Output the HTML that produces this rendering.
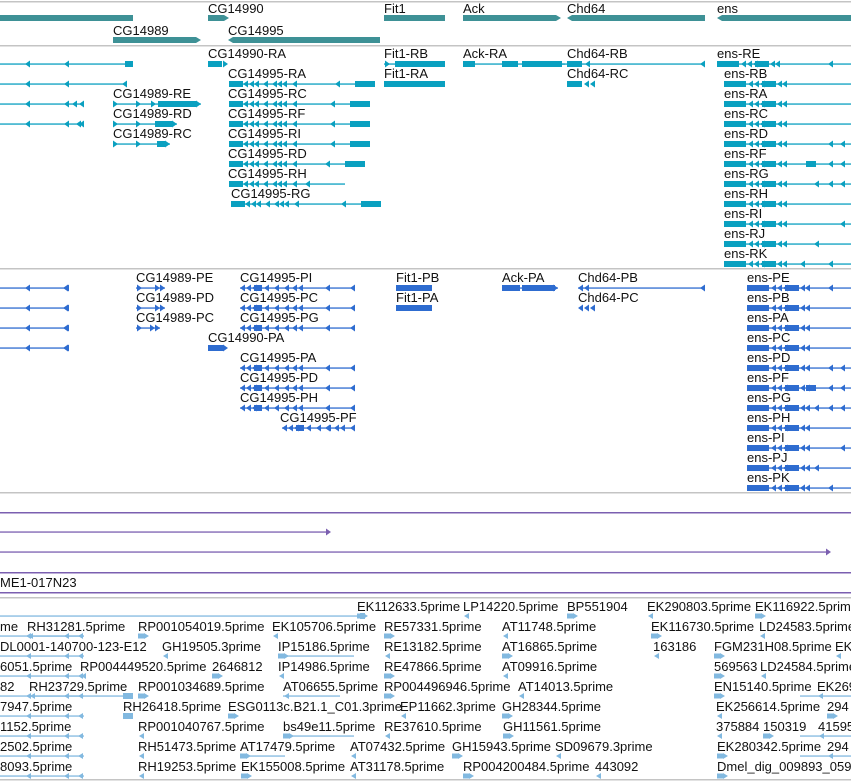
<!DOCTYPE html>
<html><head><meta charset="utf-8"><style>
html,body{margin:0;padding:0;background:#fff;width:851px;height:781px;overflow:hidden}
svg{display:block}
text{font-family:"Liberation Sans",sans-serif;font-size:13px;fill:#111}
</style></head><body>
<svg id="s" width="851" height="781" xmlns="http://www.w3.org/2000/svg"></svg>
<script>
var o=[];
var G='#3e9196',T='#0aa0c0',P='#2e6cd0',V='#7b5fb0',E='#82b9e0',GR='#c4c4c4';
function r(x,y,w,h,c){o.push('<rect x="'+x+'" y="'+y+'" width="'+w+'" height="'+h+'" fill="'+c+'"/>');}
function hl(y,c,x1,x2){r(x1||0,y,(x2||851)-(x1||0),1.5,c);}
function ln(x1,x2,y,c){r(x1,y-0.6,x2-x1,1.3,c);}
function bk(x1,x2,y,c,h){h=h||6;r(x1,y-h/2,x2-x1,h,c);}
function ar(x,y,d,c,h){h=h||7;var w=5;if(d<0)o.push('<polygon points="'+x+','+y+' '+(x+w)+','+(y-h/2)+' '+(x+w)+','+(y+h/2)+'" fill="'+c+'"/>');else o.push('<polygon points="'+x+','+y+' '+(x-w)+','+(y-h/2)+' '+(x-w)+','+(y+h/2)+'" fill="'+c+'"/>');}
function t(x,y,s){o.push('<text x="'+x+'" y="'+y+'">'+s+'</text>');}
hl(1,GR);hl(45,GR);hl(268,GR);hl(492,GR);hl(597,GR);hl(779,GR);
function gb(x1,x2,y,d){bk(x1,x2,y,G,6);if(d>0)ar(x2+5,y,1,G,6);else if(d<0)ar(x1-5,y,-1,G,6);}
gb(0,133,18,0);t(208,13,'CG14990');gb(208,224,18,1);t(384,13,'Fit1');gb(384,445,18,0);
t(463,13,'Ack');gb(463,556,18,1);t(567,13,'Chd64');gb(572,705,18,-1);t(717,13,'ens');gb(722,851,18,-1);
t(113,35,'CG14989');gb(113,196,40,1);t(228,35,'CG14995');gb(233,380,40,-1);
function left(y,x2,c,blkend){ln(0,x2,y,c);ar(25,y,-1,c);ar(64,y,-1,c);if(blkend)bk(x2-8,x2,y,c);else ar(x2-5,y,-1,c);}
function cg95(y,x2,c,big,x1){x1=x1||229;ln(x1,x2,y,c);bk(x1,x1+14,y,c);ar(x1+14,y,-1,c);ar(x1+20,y,-1,c);ar(x1+25,y,-1,c);ar(x1+34,y,-1,c);ar(x1+43,y,-1,c);ar(x1+48,y,-1,c);ar(x1+53,y,-1,c);ar(x1+63,y,-1,c);ar(x2-40,y,-1,c);if(big)bk(x2-20,x2,y,c);}
function ens(y,c,x1,ex){x1=x1||724;ln(x1,851,y,c);bk(x1,x1+22,y,c);ar(x1+24,y,-1,c);ar(x1+30,y,-1,c);ar(x1+36,y,-1,c);bk(x1+38,x1+52,y,c);ar(x1+53,y,-1,c);ar(x1+58,y,-1,c);(ex||[]).forEach(function(e){if(e<0)bk(-e,-e+10,y,c);else ar(e,y,-1,c);});}
var ty=[64,84,104,124,144,164,184,204,224,244,264];
left(64,133,T,1);left(84,127,T,0);left(104,84,T,0);ar(72,104,-1,T);left(124,84,T,0);ar(76,124,-1,T);
t(208,58,'CG14990-RA');bk(208,222,64,T);ar(228,64,1,T);
t(384,58,'Fit1-RB');ln(384,445,64,T);ar(390,64,1,T);bk(395,445,64,T);
t(384,78,'Fit1-RA');bk(384,445,84,T);
t(463,58,'Ack-RA');ln(463,565,64,T);bk(463,475,64,T);bk(502,518,64,T);bk(522,562,64,T);
t(567,58,'Chd64-RB');ln(562,705,64,T);bk(567,582,64,T);ar(585,64,-1,T);ar(700,64,-1,T);
t(567,78,'Chd64-RC');bk(567,582,84,T);ar(584,84,-1,T);ar(590,84,-1,T);
var cgn=['RA','RC','RF','RI','RD','RH','RG'],cgx=[375,370,370,370,365,345,381];
for(var i=0;i<7;i++){t(i==6?231:228,58+20*(i+1),'CG14995-'+cgn[i]);cg95(ty[i+1],cgx[i],T,i!=5,i==6?231:229);}
t(113,98,'CG14989-RE');ln(113,201,104,T);ar(118,104,1,T);ar(141,104,1,T);ar(156,104,1,T);bk(158,196,104,T);ar(201,104,1,T);
t(113,118,'CG14989-RD');ln(113,177,124,T);ar(118,124,1,T);ar(141,124,1,T);bk(155,172,124,T);ar(177,124,1,T);
t(113,138,'CG14989-RC');ln(113,170,144,T);ar(118,144,1,T);ar(141,144,1,T);bk(157,165,144,T);ar(170,144,1,T);
var en=['RE','RB','RA','RC','RD','RF','RG','RH','RI','RJ','RK'];
var ex=[[828],[],[],[],[828,840],[-806,828,840],[814,828,840],[],[840],[814],[800,828]];
for(i=0;i<11;i++){t(i==0?717:724,58+20*i,'ens-'+en[i]);ens(ty[i],T,i==0?717:724,ex[i]);}
var py=[288,308,328,348,368,388,408,428,448,468,488];
left(288,68,P,0);left(308,68,P,0);left(328,68,P,0);left(348,68,P,0);
function cgp(y,x1,x2){ln(x1,x2,y,P);ar(x1,y,-1,P);ar(x1+6,y,-1,P);ar(x1+12,y,-1,P);bk(x1+14,x1+22,y,P);ar(x1+24,y,-1,P);ar(x1+34,y,-1,P);ar(x1+44,y,-1,P);ar(x1+52,y,-1,P);ar(x1+58,y,-1,P);ar(x2-30,y,-1,P);ar(x2-5,y,-1,P);}
t(136,282,'CG14989-PE');ln(136,165,288,P);ar(142,288,1,P);ar(160,288,1,P);ar(165,288,1,P);
t(136,302,'CG14989-PD');ln(136,165,308,P);ar(142,308,1,P);ar(160,308,1,P);ar(165,308,1,P);
t(136,322,'CG14989-PC');ln(136,160,328,P);ar(142,328,1,P);ar(155,328,1,P);ar(160,328,1,P);
t(208,342,'CG14990-PA');bk(208,224,348,P);ar(228,348,1,P);
var pn=['PI','PC','PG',null,'PA','PD','PH','PF'];
for(i=0;i<8;i++){if(!pn[i])continue;var x1=i==7?280:240;t(x1,282+20*i,'CG14995-'+pn[i]);cgp(py[i],i==7?282:240,355);}
t(396,282,'Fit1-PB');bk(396,432,288,P);t(396,302,'Fit1-PA');bk(396,432,308,P);
t(502,282,'Ack-PA');ln(502,558,288,P);bk(502,520,288,P);bk(522,555,288,P);ar(558,288,1,P);
t(578,282,'Chd64-PB');ln(578,705,288,P);ar(578,288,-1,P);ar(584,288,-1,P);ar(700,288,-1,P);
t(578,302,'Chd64-PC');ar(578,308,-1,P);ar(584,308,-1,P);ar(590,308,-1,P);
var pe=['PE','PB','PA','PC','PD','PF','PG','PH','PI','PJ','PK'];
for(i=0;i<11;i++){t(747,282+20*i,'ens-'+pe[i]);ens(py[i],P,747,ex[i]);}
hl(512,V);ln(0,326,532,V);ar(331,532,1,V);ln(0,826,552,V);ar(831,552,1,V);hl(572,V);t(0,587,'ME1-017N23');hl(592,V);
var rows=[
[[357,'EK112633.5prime'],[463,'LP14220.5prime'],[567,'BP551904'],[647,'EK290803.5prime'],[755,'EK116922.5prime']],
[[0,'me'],[27,'RH31281.5prime'],[138,'RP001054019.5prime'],[272,'EK105706.5prime'],[384,'RE57331.5prime'],[502,'AT11748.5prime'],[651,'EK116730.5prime'],[759,'LD24583.5prime']],
[[0,'DL0001-140700-123-E12'],[162,'GH19505.3prime'],[278,'IP15186.5prime'],[384,'RE13182.5prime'],[502,'AT16865.5prime'],[653,'163186'],[714,'FGM231H08.5prime'],[835,'EK']],
[[0,'6051.5prime'],[80,'RP004449520.5prime'],[212,'2646812'],[278,'IP14986.5prime'],[384,'RE47866.5prime'],[502,'AT09916.5prime'],[714,'569563'],[760,'LD24584.5prime']],
[[0,'82'],[29,'RH23729.5prime'],[138,'RP001034689.5prime'],[283,'AT06655.5prime'],[384,'RP004496946.5prime'],[518,'AT14013.5prime'],[714,'EN15140.5prime'],[817,'EK269']],
[[0,'7947.5prime'],[123,'RH26418.5prime'],[228,'ESG0113c.B21.1_C01.3prime'],[400,'EP11662.3prime'],[502,'GH28344.5prime'],[716,'EK256614.5prime'],[827,'294']],
[[0,'1152.5prime'],[138,'RP001040767.5prime'],[283,'bs49e11.5prime'],[384,'RE37610.5prime'],[503,'GH11561.5prime'],[716,'375884'],[763,'150319'],[818,'41595']],
[[0,'2502.5prime'],[138,'RH51473.5prime'],[240,'AT17479.5prime'],[350,'AT07432.5prime'],[452,'GH15943.5prime'],[555,'SD09679.3prime'],[717,'EK280342.5prime'],[827,'294']],
[[0,'8093.5prime'],[138,'RH19253.5prime'],[241,'EK155008.5prime'],[350,'AT31178.5prime'],[463,'RP004200484.5prime'],[595,'443092'],[717,'Dmel_dig_009893_059']]];
for(i=0;i<9;i++){var yb=611+20*i,fy=616+20*i;rows[i].forEach(function(a,j){t(a[0],yb,a[1]);if(a[0]>0||j>0){var x=a[0];if(j%2)ar(x+1,fy,-1,E,6);else{bk(x,x+6,fy,E,5);ar(x+11,fy,1,E,6);}}});}
ln(0,358,616,E);ar(357,616,-1,E,6);bk(360,365,616,E,6);
for(i=1;i<9;i++){var fy=616+20*i;ln(0,84,fy,E);ar(26,fy,-1,E,6);ar(64,fy,-1,E,6);ar(78,fy,-1,E,6);}
ln(30,84,636,E);ln(29,130,696,E);bk(123,133,696,E);bk(123,133,716,E);
ln(283,354,656,E);ln(283,340,696,E);ln(283,354,736,E);ln(250,285,756,E);
ln(800,851,736,E);ln(800,851,756,E);ln(800,851,696,E);
document.getElementById('s').innerHTML=o.join('');
</script>
</body></html>
